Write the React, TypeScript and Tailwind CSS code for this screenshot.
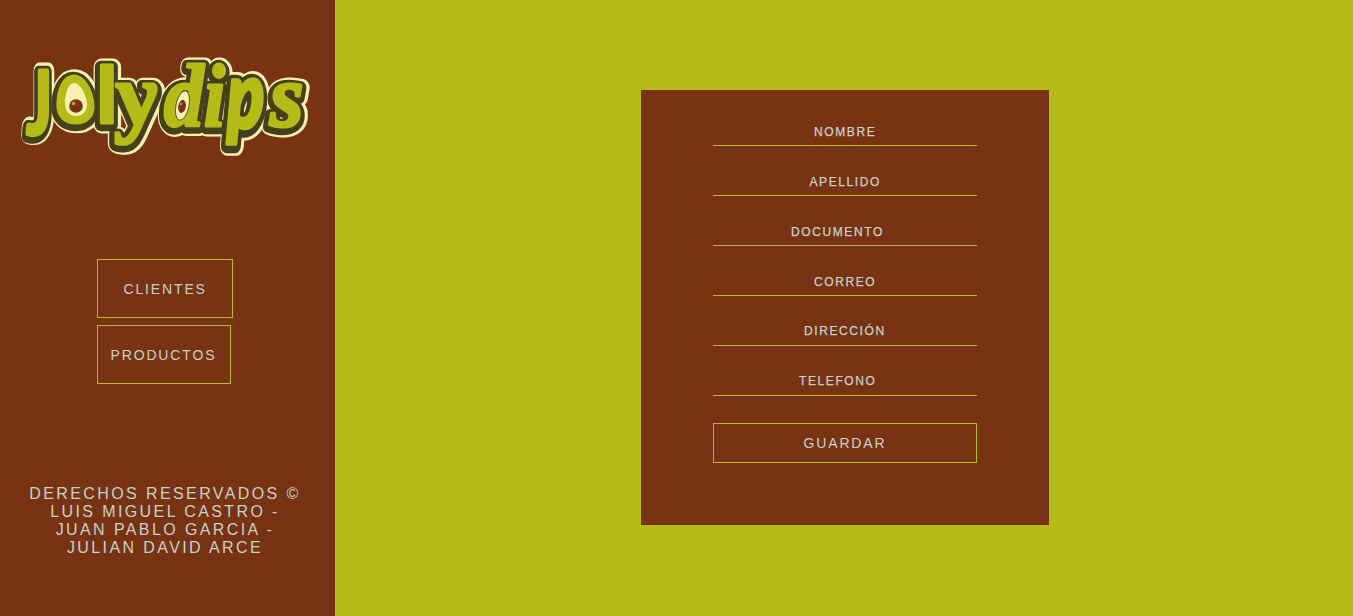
const GREEN = '#b5bb17';
const DARK = '#45401c';
const CREAM = '#fbf0b4';

const LATO = 'Lato, "Open Sans", sans-serif';
const SANS = '"Liberation Sans", Arial, sans-serif';
const SERIF = '"Liberation Serif", "Times New Roman", serif';

type Letter = {
  char: string;
  x: number;
  y: number;
  size: number;
  sx: number;
  sy: number;
  skew: number;
  family: string;
  weight: number;
  italic: boolean;
};

const letters: Letter[] = [
  { char: 'J', x: 26, y: 134.5, size: 89, sx: 0.68, sy: 1, skew: 0, family: LATO, weight: 900, italic: false },
  { char: 'l', x: 96, y: 123, size: 80, sx: 0.98, sy: 1, skew: 0, family: SANS, weight: 700, italic: false },
  { char: 'y', x: 122, y: 125, size: 89, sx: 1.02, sy: 1, skew: 10, family: SERIF, weight: 700, italic: true },
  { char: 'd', x: 164, y: 126, size: 88, sx: 0.9, sy: 1, skew: 0, family: SERIF, weight: 700, italic: true },
  { char: 'i', x: 204, y: 126, size: 88, sx: 0.86, sy: 1, skew: 0, family: SERIF, weight: 700, italic: true },
  { char: 'p', x: 227, y: 128, size: 80, sx: 0.86, sy: 1.17, skew: 0, family: LATO, weight: 900, italic: true },
  { char: 's', x: 270, y: 126, size: 89, sx: 0.97, sy: 1, skew: 0, family: SERIF, weight: 700, italic: true },
];

const AVOCADO = 'M74 76C63 76 58 91 58 105C58 117 66 123 76 123C87 123 93 116 93 106C92 91 84 76 74 76Z';

function Layer({ color, width, dx, dy }: { color: string; width: number; dx: number; dy: number }) {
  return (
    <g
      transform={`translate(${dx} ${dy})`}
      fill={color}
      stroke={color}
      strokeWidth={width}
      strokeLinejoin="round"
    >
      <path d={AVOCADO} />
      {letters.map((l) => (
        <text
          key={l.char}
          transform={`translate(${l.x} ${l.y}) skewX(${l.skew}) scale(${l.sx} ${l.sy})`}
          fontFamily={l.family}
          fontSize={l.size}
          fontWeight={l.weight}
          fontStyle={l.italic ? 'italic' : 'normal'}
        >
          {l.char}
        </text>
      ))}
    </g>
  );
}

function Logo() {
  return (
    <svg className="block h-[110px] w-[295px] overflow-visible" viewBox="18 53 295 110" role="img">
      <Layer color={CREAM} width={17} dx={0.5} dy={1.8} />
      <Layer color={DARK} width={12.5} dx={-0.5} dy={2} />
      <Layer color={GREEN} width={3.2} dx={0} dy={0} />
      <path
        d="M74 83C68 83 65 94 65 103C65 111 69 116 76 116C83 116 87 111 87 104C86 94 80 83 74 83Z"
        fill={CREAM}
      />
      <circle cx="76" cy="106" r="6.8" fill="#7b3210" />
      <circle cx="73.5" cy="103.5" r="1.8" fill="#d68c6a" />
      <ellipse cx="182.5" cy="105.5" rx="6.5" ry="15" transform="rotate(12 182.5 105.5)" fill={CREAM} stroke={DARK} strokeWidth="0.8" />
      <ellipse cx="182" cy="106.5" rx="3.8" ry="6.5" transform="rotate(10 182 106.5)" fill="#7b3210" />
      <circle cx="181" cy="104" r="1.2" fill="#d68c6a" />
    </svg>
  );
}

const fields = [
  { label: 'NOMBRE', cls: 'pt-[34px] pl-[101px] h-14' },
  { label: 'APELLIDO', cls: 'pt-7 pl-[96.5px] h-[50px]' },
  { label: 'DOCUMENTO', cls: 'pt-7 pl-[78px] h-[50px]' },
  { label: 'CORREO', cls: 'pt-7 pl-[101px] h-[50px]' },
  { label: 'DIRECCIÓN', cls: 'pt-[27px] pl-[91px] h-[50px]' },
  { label: 'TELEFONO', cls: 'pt-[27px] pl-[86px] h-[50px]' },
];

export default function App() {
  return (
    <div className="flex h-[616px] w-full overflow-hidden bg-[#b5bb17] font-['Liberation_Sans',Arial,sans-serif] text-[#c3d3cb]">
      <aside className="flex w-[335px] shrink-0 flex-col bg-[#783412] pt-[53px]">
        <div className="pl-[18px]">
          <Logo />
        </div>
        <nav className="mt-24 ml-[97px] flex flex-col items-start gap-[7px] text-sm tracking-[1.85px]">
          <a className="flex h-[59px] w-[136px] items-center border border-[#b5bb17] pl-[25.5px]">CLIENTES</a>
          <a className="flex h-[59px] w-[134px] items-center border border-[#b5bb17] pl-[12.5px]">PRODUCTOS</a>
        </nav>
        <footer className="mt-[101px] w-[330px] text-center text-base leading-[18px] tracking-[2.4px]">
          DERECHOS RESERVADOS ©
          <br />
          LUIS MIGUEL CASTRO -
          <br />
          JUAN PABLO GARCIA -
          <br />
          JULIAN DAVID ARCE
        </footer>
      </aside>
      <main className="flex grow justify-center pt-[90px] pl-0.5">
        <form className="h-[435px] w-[408px] bg-[#783412] px-[72px]">
          {fields.map((f) => (
            <label
              key={f.label}
              className={`block border-b border-[#b5bb17] text-xs leading-4 tracking-[1.6px] [-webkit-text-stroke:0.25px] ${f.cls}`}
            >
              {f.label}
            </label>
          ))}
          <button
            type="button"
            className="mt-[27px] block h-10 w-[264px] border border-[#b5bb17] text-sm tracking-[1.85px]"
          >
            GUARDAR
          </button>
        </form>
      </main>
    </div>
  );
}
